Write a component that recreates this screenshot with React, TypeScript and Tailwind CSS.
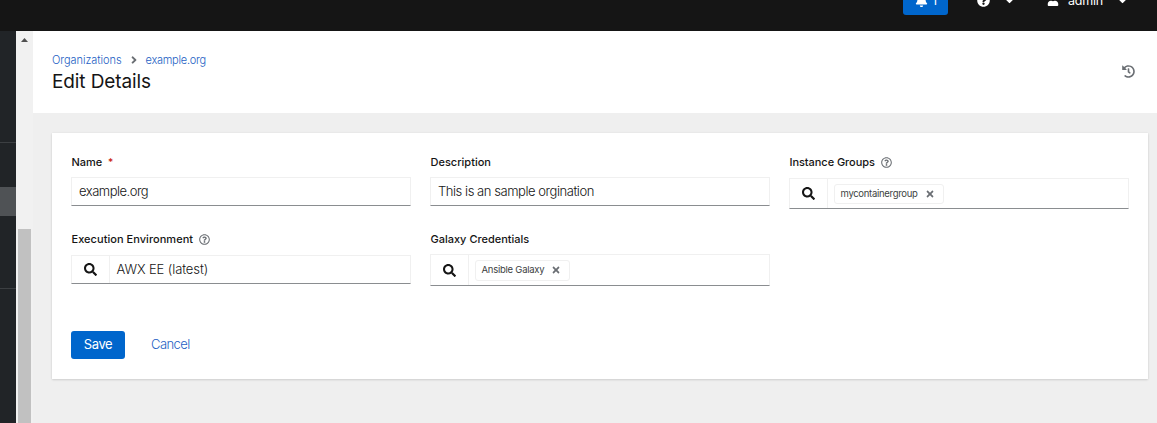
import type { ReactNode } from "react";
import {
  FaAngleRight,
  FaBell,
  FaCaretDown,
  FaHistory,
  FaQuestionCircle,
  FaRegQuestionCircle,
  FaSearch,
  FaTimes,
  FaUser,
} from "react-icons/fa";

function Masthead() {
  return (
    <header className="flex h-[31px] shrink-0 items-start overflow-hidden bg-[#151515] text-white">
      <div className="-mt-[13px] ml-[903px] flex h-7 w-[45px] shrink-0 items-center justify-center gap-1 rounded-[3px] bg-[#0066cc] text-[12.5px]">
        <FaBell className="-mt-[2px] ml-px size-[13px]" />
        <span className="leading-none">1</span>
      </div>
      <div className="-mt-[13px] ml-[29px] flex h-7 shrink-0 items-center">
        <FaQuestionCircle className="-mt-[1px] size-[13px]" />
        <FaCaretDown className="-mt-[1px] ml-[13px] size-[13px]" />
      </div>
      <div className="-mt-[13px] ml-[31px] flex h-7 shrink-0 items-center">
        <FaUser className="-mt-[2px] size-[12px]" />
        <span className="ml-[9px] w-9 text-[12.5px] tracking-[-0.2px]">admin</span>
        <FaCaretDown className="-mt-[1px] ml-[12px] size-[13px]" />
      </div>
    </header>
  );
}

function SideNav() {
  return (
    <nav className="w-4 shrink-0 bg-[#212427]">
      <div className="h-[112px] border-b border-[#3c3f42]" />
      <div className="mt-11 h-[29px] bg-[#4f5255]" />
      <div className="h-[73px] border-b border-[#3c3f42]" />
    </nav>
  );
}

function ScrollTrack() {
  return (
    <div className="flex w-[17px] shrink-0 flex-col items-center bg-[#f1f1f1]">
      <svg className="mt-[7px] h-1 w-[7px]" viewBox="0 0 7 4" fill="#505050">
        <path d="M3.5 0 7 4H0z" />
      </svg>
      <div className="mt-[187px] w-[13px] flex-1 bg-[#c1c1c1]" />
    </div>
  );
}

function Field({
  label,
  tracking,
  required,
  help,
  top,
  children,
}: {
  label: string;
  tracking: string;
  required?: boolean;
  help?: boolean;
  top: string;
  children: ReactNode;
}) {
  return (
    <div className="h-[77px] w-[340px]">
      <div className="flex h-[18px] items-center pl-[0.5px] text-[11px] font-medium whitespace-nowrap text-[#151515]">
        <span className={tracking}>{label}</span>
        {required && <span className="ml-[6px] text-[10px] text-[#c9190b]">*</span>}
        {help && <FaRegQuestionCircle className="ml-[6px] size-[11px] text-[#6a6e73]" />}
      </div>
      <div className={top}>{children}</div>
    </div>
  );
}

const frame = "flex border border-[#f0f0f0] border-b-[#8a8d90] bg-white";
const value = "text-[13px] font-light text-[#151515]";

function SearchButton() {
  return (
    <button className="flex w-[38px] shrink-0 items-center justify-center border-r border-[#f0f0f0] text-[#151515]">
      <FaSearch className="size-[13px]" />
    </button>
  );
}

function Chip({ text, className }: { text: string; className: string }) {
  return (
    <div className={`flex items-center justify-between rounded-[3px] border border-[#f0f0f0] pr-[8.5px] pl-[5.5px] text-[9.5px] text-[#3c3f42] ${className}`}>
      <span className="whitespace-nowrap">{text}</span>
      <FaTimes className="-mt-px size-[10px] text-[#6a6e73]" />
    </div>
  );
}

export default function App() {
  return (
    <div className="flex h-[423px] w-[1157px] flex-col overflow-hidden bg-[#efefef] font-['Inter',sans-serif]">
      <Masthead />
      <div className="flex min-h-0 flex-1">
        <SideNav />
        <ScrollTrack />
        <main className="flex-1">
          <div className="flex h-[82px] justify-between bg-white pt-5 pr-[22px] pl-[19px]">
            <div>
              <div className="flex h-[18px] items-center text-[11px] font-light text-[#1e5fc4]">
                <a className="w-[69px] tracking-[-0.06px]">Organizations</a>
                <FaAngleRight className="mr-[6px] ml-[6.5px] size-[12px] text-[#6a6e73]" />
                <a className="tracking-[-0.25px]">example.org</a>
              </div>
              <h1 className="h-6 pt-px text-[19px] leading-6 tracking-[-0.1px] text-[#151515]">Edit Details</h1>
            </div>
            <FaHistory className="mt-[14px] size-[13px] text-[#6a6e73]" />
          </div>
          <section className="mt-5 ml-[19px] h-[246px] w-[1096px] bg-white px-[19px] pt-5 shadow-[0_1px_2px_rgba(3,3,3,0.12),0_0_2px_rgba(3,3,3,0.06)]">
            <div className="grid grid-cols-[repeat(3,340px)] gap-x-[19px]">
              <Field label="Name" tracking="tracking-[-0.05px]" required top="mt-[6px]">
                <div className={`${frame} h-[29px] items-center px-[7px]`}>
                  <span className={`${value} tracking-[-0.5px]`}>example.org</span>
                </div>
              </Field>
              <Field label="Description" tracking="" top="mt-[6px]">
                <div className={`${frame} h-[29px] items-center px-[7px]`}>
                  <span className={`${value} tracking-[-0.45px]`}>This is an sample orgination</span>
                </div>
              </Field>
              <Field label="Instance Groups" tracking="tracking-[-0.06px]" help top="mt-[7px]">
                <div className={`${frame} h-[31px]`}>
                  <SearchButton />
                  <Chip text="mycontainergroup" className="mt-[5px] ml-[6px] h-[20px] w-[110px] tracking-[-0.3px]" />
                </div>
              </Field>
              <Field label="Execution Environment" tracking="tracking-[0.04px]" help top="mt-[7px]">
                <div className={`${frame} h-[29px]`}>
                  <SearchButton />
                  <span className={`${value} ml-[6.5px] self-center tracking-[-0.1px]`}>AWX EE (latest)</span>
                </div>
              </Field>
              <Field label="Galaxy Credentials" tracking="" top="mt-[6px]">
                <div className={`${frame} h-8`}>
                  <SearchButton />
                  <Chip text="Ansible Galaxy" className="mt-[5px] ml-[6px] h-[21px] w-[95px] tracking-[-0.25px]" />
                </div>
              </Field>
            </div>
            <div className="mt-6 flex h-7 items-center">
              <button className="h-7 w-[54px] rounded-[3px] bg-[#0066cc] text-[13px] tracking-[-0.4px] text-white">Save</button>
              <button className="ml-[26px] text-[13px] font-light tracking-[-0.55px] text-[#1e5fc4]">Cancel</button>
            </div>
          </section>
        </main>
      </div>
    </div>
  );
}
